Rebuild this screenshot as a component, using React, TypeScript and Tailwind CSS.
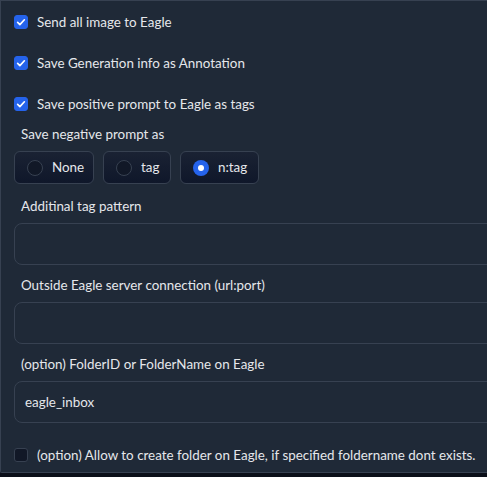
import React from "react";

const font = { fontFamily: '"Source Sans Pro", Lato, "Noto Sans", sans-serif' };

function Check({ checked, label }: { checked: boolean; label: string }) {
  return (
    <label className="flex items-center gap-[9px] h-[20px]">
      <span
        className={
          "w-[14px] h-[14px] rounded-[3px] flex items-center justify-center border shrink-0 " +
          (checked ? "bg-[#2563eb] border-[#2563eb]" : "bg-[#111827] border-[#374151]")
        }
      >
        {checked && (
          <svg viewBox="0 0 16 16" className="w-[12px] h-[12px]" fill="none">
            <path d="M3.5 8.5l3 3 6-6.5" stroke="white" strokeWidth="2.2" strokeLinecap="round" strokeLinejoin="round" />
          </svg>
        )}
      </span>
      <span className="text-[13.4px] text-[#e5e7eb] whitespace-nowrap">{label}</span>
    </label>
  );
}

function Radio({ label, checked, w }: { label: string; checked?: boolean; w: string }) {
  return (
    <div
      className={
        "h-[33px] rounded-[6px] border border-[#374151] bg-gradient-to-t from-[#0f172a] to-[#1a2233] flex items-center pl-[12px] gap-[9px] " +
        w
      }
    >
      <span
        className={
          "w-[16px] h-[16px] rounded-full flex items-center justify-center " +
          (checked ? "bg-[#2563eb]" : "bg-[#111827] border border-[#374151]")
        }
      >
        {checked && <span className="w-[6px] h-[6px] rounded-full bg-white" />}
      </span>
      <span className="text-[13.4px] text-[#e5e7eb]">{label}</span>
    </div>
  );
}

function Field({ label, value }: { label: string; value?: string }) {
  return (
    <div className="flex flex-col">
      <div className="text-[13.4px] text-[#e5e7eb] pl-[7px] h-[20px] leading-[20px]">{label}</div>
      <div className="mt-[7px] h-[42px] rounded-[8px] border border-[#374151] bg-[#1f2937] flex items-center px-[10px] text-[13.4px] text-[#e5e7eb]">
        {value}
      </div>
    </div>
  );
}

export default function App() {
  return (
    <div className="w-[487px] h-[477px] bg-[#0b0f19] overflow-hidden" style={font}>
      <div className="w-[540px] h-[473px] bg-[#1f2937] border-l border-t border-b border-[#374151] rounded-bl-[2px] pl-[13px] pr-[40px] pt-[11px]">
        <div className="flex flex-col gap-[21px]">
          <Check checked label="Send all image to Eagle" />
          <Check checked label="Save Generation info as Annotation" />
          <Check checked label="Save positive prompt to Eagle as tags" />
        </div>
        <div className="mt-[10px] text-[13.4px] text-[#e5e7eb] pl-[7px] h-[20px] leading-[20px]">Save negative prompt as</div>
        <div className="mt-[7px] flex gap-[9px]">
          <Radio label="None" w="w-[80px]" />
          <Radio label="tag" w="w-[68px]" />
          <Radio label="n:tag" checked w="w-[79px]" />
        </div>
        <div className="mt-[12px] flex flex-col gap-[10px]">
          <Field label="Additinal tag pattern" />
          <Field label="Outside Eagle server connection (url:port)" />
          <Field label="(option) FolderID or FolderName on Eagle" value="eagle_inbox" />
        </div>
        <div className="mt-[22px]">
          <Check checked={false} label="(option) Allow to create folder on Eagle, if specified foldername dont exists." />
        </div>
      </div>
    </div>
  );
}
